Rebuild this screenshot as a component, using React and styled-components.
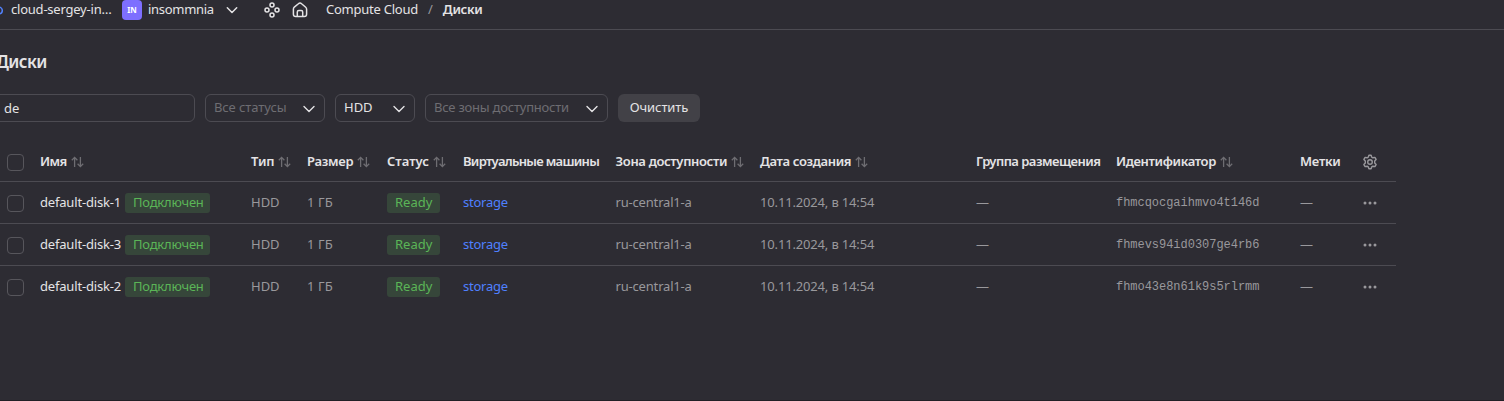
import React from "react";
import styled, { createGlobalStyle } from "styled-components";

const color = {
  bg: "#2d2c33",
  line: "#4c4b52",
  primary: "#e4e3e5",
  secondary: "#99989c",
  hint: "#6e6d72",
  link: "#4f80ff",
};

const GlobalStyle = createGlobalStyle`
  * { box-sizing: border-box; }
  body {
    margin: 0;
    background: ${color.bg};
    color: ${color.primary};
    font-family: "Noto Sans", "Liberation Sans", sans-serif;
    font-size: 13px;
    line-height: 18px;
  }
`;

const Page = styled.div`
  height: 401px;
  overflow: hidden;
  border-bottom: 1px solid #212026;
`;

const TopBar = styled.header`
  display: flex;
  align-items: flex-start;
  height: 30px;
  border-bottom: 1px solid ${color.line};
  white-space: nowrap;
`;

const CloudIcon = styled.svg`
  width: 11px;
  height: 20px;
  flex: none;
`;

const CloudName = styled.span`
  width: 111px;
  letter-spacing: -0.22px;
`;

const FolderBadge = styled.span`
  width: 20px;
  height: 20px;
  margin-right: 6px;
  border-radius: 4px;
  background: #7d6fff;
  color: #fff;
  font-size: 8px;
  font-weight: 700;
  line-height: 20px;
  text-align: center;
`;

const FolderName = styled.span`
  width: 77px;
  letter-spacing: -0.3px;
`;

const NavIcon = styled.svg`
  width: 16px;
  height: 16px;
  margin-top: 2px;
  margin-left: ${(p) => p.$gap}px;
  flex: none;
  fill: none;
  stroke: ${color.primary};
  stroke-width: 1.5;
`;

const Breadcrumbs = styled.nav`
  display: flex;
  margin-left: 18px;
`;

const Crumb = styled.span`
  font-weight: ${(p) => (p.$current ? 600 : 400)};
  letter-spacing: ${(p) => (p.$current ? -0.3 : -0.24)}px;
`;

const Slash = styled.span`
  margin: 0 10px;
  color: ${color.secondary};
`;

const Title = styled.h1`
  margin: 20px 0 0 -4px;
  font-size: 17px;
  font-weight: 600;
  line-height: 24px;
  letter-spacing: -0.6px;
`;

const Filters = styled.div`
  display: flex;
  gap: 10px;
  margin-top: 20px;
  margin-left: -8px;
`;

const Field = styled.div`
  display: flex;
  align-items: center;
  justify-content: space-between;
  width: ${(p) => p.$width}px;
  height: 28px;
  padding: ${(p) => (p.$search ? "0 11px 1px" : "0 9px 2px 8px")};
  border: 1px solid ${color.line};
  border-radius: 6px;
  white-space: nowrap;
  color: ${(p) => (p.$placeholder ? color.hint : color.primary)};
  letter-spacing: ${(p) => p.$tracking || 0}px;
`;

const Chevron = styled.svg`
  width: 12px;
  height: 8px;
  margin-top: 3px;
  flex: none;
  fill: none;
  stroke: ${color.primary};
  stroke-width: 1.4;
`;

const ClearButton = styled.button`
  width: 82px;
  height: 28px;
  padding: 0 0 2px;
  border: 0;
  border-radius: 6px;
  background: #424147;
  color: ${color.primary};
  font: inherit;
  letter-spacing: -0.1px;
`;

const Table = styled.div`
  width: 1396px;
  margin-top: 20px;
`;

const Row = styled.div`
  display: grid;
  grid-template-columns: 40px 211px 56px 80px 76px 152.5px 144.5px 216px 140px 184px 62px 34px;
  align-items: center;
  height: ${(p) => (p.$head ? 40 : p.$last ? 41 : 42)}px;
  padding-bottom: ${(p) => (p.$head ? 1 : 0)}px;
  border-bottom: ${(p) => (p.$last ? 0 : 1)}px solid ${color.line};
  white-space: nowrap;
  color: ${color.secondary};
`;

const HeadCell = styled.div`
  display: flex;
  align-items: center;
  color: ${color.primary};
  font-weight: 600;
  letter-spacing: ${(p) => p.$tracking || 0}px;
`;

const SortIcon = styled.svg`
  width: 13px;
  height: 12px;
  margin: 1px 0 0 4px;
  fill: none;
  stroke: ${color.hint};
  stroke-width: 1.3;
`;

const Checkbox = styled.span`
  display: block;
  width: 17px;
  height: 17px;
  margin: 2px 0 0 7px;
  border: 1px solid #57565c;
  border-radius: 4px;
`;

const Cell = styled.div`
  padding-bottom: ${(p) => (p.$label ? 0 : 1)}px;
  letter-spacing: ${(p) => p.$tracking || 0}px;
`;

const NameCell = styled.div`
  display: flex;
  align-items: center;
`;

const DiskName = styled.span`
  width: 85px;
  padding-bottom: 1px;
  color: ${color.primary};
  letter-spacing: -0.18px;
`;

const Label = styled.span`
  display: inline-block;
  height: 20px;
  margin-top: 1px;
  padding: 0 8px;
  width: ${(p) => p.$width}px;
  border-radius: 3px;
  background: #36463a;
  color: #5bb557;
  letter-spacing: ${(p) => p.$tracking || 0}px;
`;

const VmLink = styled.a`
  color: ${color.link};
  letter-spacing: -0.25px;
`;

const DiskId = styled.span`
  font-family: "Liberation Mono", monospace;
  font-size: 12px;
  letter-spacing: -0.03px;
`;

const ActionIcon = styled.svg`
  display: block;
  width: 16px;
  height: 16px;
  margin-top: 1px;
  fill: none;
  stroke: ${color.secondary};
  stroke-width: 1.4;
`;

const Down = () => (
  <Chevron viewBox="0 0 12 8">
    <path d="M1 1.5 6 6.5 11 1.5" strokeLinecap="round" strokeLinejoin="round" />
  </Chevron>
);

const columns = [
  { title: "Имя", sort: true, tracking: -0.6 },
  { title: "Тип", sort: true, tracking: -0.1 },
  { title: "Размер", sort: true, tracking: -0.25 },
  { title: "Статус", sort: true },
  { title: "Виртуальные машины", tracking: -0.7 },
  { title: "Зона доступности", sort: true, tracking: -0.34 },
  { title: "Дата создания", sort: true, tracking: -0.36 },
  { title: "Группа размещения", tracking: -0.52 },
  { title: "Идентификатор", sort: true, tracking: -0.36 },
  { title: "Метки", tracking: -0.25 },
];

const disks = [
  { name: "default-disk-1", id: "fhmcqocgaihmvo4t146d" },
  { name: "default-disk-3", id: "fhmevs94id0307ge4rb6" },
  { name: "default-disk-2", id: "fhmo43e8n61k9s5rlrmm" },
];

export default function App() {
  return (
    <>
      <GlobalStyle />
      <Page>
        <TopBar>
          <CloudIcon viewBox="0 0 11 20">
            <circle cx="-1" cy="10.5" r="3.3" fill="none" stroke="#5282ff" strokeWidth="1.5" />
          </CloudIcon>
          <CloudName>cloud-sergey-in…</CloudName>
          <FolderBadge>IN</FolderBadge>
          <FolderName>insommnia</FolderName>
          <NavIcon viewBox="0 0 16 16" $gap={-1}>
            <path d="M3.3 5.8 8 10.5 12.7 5.8" strokeLinecap="round" strokeLinejoin="round" />
          </NavIcon>
          <NavIcon viewBox="0 0 16 16" $gap={24}>
            <circle cx="8" cy="3" r="2" />
            <circle cx="3" cy="8" r="2" />
            <circle cx="13" cy="8" r="2" />
            <circle cx="8" cy="13" r="2" />
          </NavIcon>
          <NavIcon viewBox="0 0 16 16" $gap={12}>
            <path
              d="M1.4 7.2c0-.8.3-1.5.9-2L6.4 1.7a2.4 2.4 0 0 1 3.2 0l4.1 3.5c.6.5.9 1.2.9 2v5.1a2.3 2.3 0 0 1-2.3 2.3H3.7a2.3 2.3 0 0 1-2.3-2.3zM5.3 14.5V10a1.5 1.5 0 0 1 1.5-1.5h2.4a1.5 1.5 0 0 1 1.5 1.5v4.5"
              strokeLinejoin="round"
            />
          </NavIcon>
          <Breadcrumbs>
            <Crumb>Compute Cloud</Crumb>
            <Slash>/</Slash>
            <Crumb $current>Диски</Crumb>
          </Breadcrumbs>
        </TopBar>

        <Title>Диски</Title>

        <Filters>
          <Field $width={203} $search>de</Field>
          <Field $width={120} $placeholder $tracking={-0.08}>Все статусы<Down /></Field>
          <Field $width={80}>HDD<Down /></Field>
          <Field $width={183} $placeholder $tracking={-0.22}>Все зоны доступности<Down /></Field>
          <ClearButton>Очистить</ClearButton>
        </Filters>

        <Table>
          <Row $head>
            <Checkbox />
            {columns.map((c) => (
              <HeadCell key={c.title} $tracking={c.tracking}>
                {c.title}
                {c.sort && (
                  <SortIcon viewBox="0 0 13 12">
                    <path d="M3.6 11V1.5M.8 4.2 3.6 1.4 6.4 4.2M9.4 1V10.5M6.6 7.8 9.4 10.6 12.2 7.8" />
                  </SortIcon>
                )}
              </HeadCell>
            ))}
            <ActionIcon viewBox="0 0 16 16">
              <circle cx="8" cy="8" r="2.3" />
              <path
                d="M6.9 1.2h2.2l.6 1.9 1.2.7 2-.4 1.2 2-1.4 1.5v2.2l1.4 1.5-1.2 2-2-.4-1.2.7-.6 1.9H6.9l-.6-1.9-1.2-.7-2 .4-1.2-2 1.4-1.5V6.9L1.9 5.4l1.2-2 2 .4 1.2-.7z"
                strokeLinejoin="round"
              />
            </ActionIcon>
          </Row>
          {disks.map((d, i) => (
            <Row key={d.id} $last={i === disks.length - 1}>
              <Checkbox />
              <NameCell>
                <DiskName>{d.name}</DiskName>
                <Label $width={85} $tracking={-0.22}>Подключен</Label>
              </NameCell>
              <Cell>HDD</Cell>
              <Cell $tracking={0.1}>1 ГБ</Cell>
              <Cell $label><Label $width={53}>Ready</Label></Cell>
              <Cell><VmLink>storage</VmLink></Cell>
              <Cell $tracking={-0.18}>ru-central1-a</Cell>
              <Cell $tracking={-0.16}>10.11.2024, в 14:54</Cell>
              <Cell>—</Cell>
              <Cell><DiskId>{d.id}</DiskId></Cell>
              <Cell>—</Cell>
              <ActionIcon viewBox="0 0 16 16">
                <g fill={color.secondary} stroke="none">
                  <circle cx="3" cy="8" r="1.5" />
                  <circle cx="8" cy="8" r="1.5" />
                  <circle cx="13" cy="8" r="1.5" />
                </g>
              </ActionIcon>
            </Row>
          ))}
        </Table>
      </Page>
    </>
  );
}
